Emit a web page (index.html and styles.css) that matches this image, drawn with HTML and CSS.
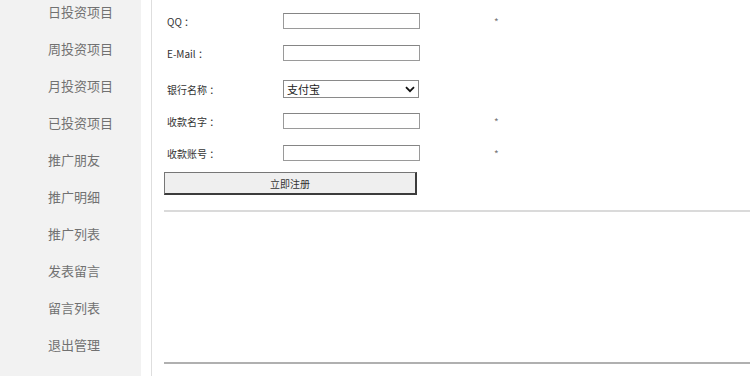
FILE: index.html
```html
<!DOCTYPE html>
<html lang="zh-CN">
<head>
  <meta charset="UTF-8" />
  <meta name="viewport" content="width=device-width, initial-scale=1.0"/>
  <title>会员注册</title>
  <link rel="stylesheet" href="styles.css">
</head>
<body>
  <div class="page">
    <div id="sidebar">
      <ul class="menu">
        <li>日投资项目</li>
        <li>周投资项目</li>
        <li>月投资项目</li>
        <li>已投资项目</li>
        <li>推广朋友</li>
        <li>推广明细</li>
        <li>推广列表</li>
        <li>发表留言</li>
        <li>留言列表</li>
        <li>退出管理</li>
      </ul>
    </div>

    <div id="main">
      <form name="regForm" class="reg-form">
        <div class="form-row">
          <label for="qq">QQ ：</label>
          <input type="text" id="qq" name="qq" />
          <span class="star">*</span>
        </div>
        <div class="form-row">
          <label for="email">E-Mail ：</label>
          <input type="text" id="email" name="email" />
          <span class="star"></span>
        </div>
        <div class="form-row form-row-select">
          <label for="bank">银行名称 ：</label>
          <div class="select-wrap">
            <select id="bank" name="bank">
              <option value="alipay">支付宝</option>
              <option value="icbc">工商银行</option>
              <option value="ccb">建设银行</option>
            </select>
            <svg class="chevron" width="10" height="7" viewBox="0 0 10 7">
              <path d="M1 1.2 L5 5.2 L9 1.2" fill="none" stroke="#111" stroke-width="1.8"/>
            </svg>
          </div>
          <span class="star"></span>
        </div>
        <div class="form-row">
          <label for="payname">收款名字 ：</label>
          <input type="text" id="payname" name="payname" />
          <span class="star">*</span>
        </div>
        <div class="form-row">
          <label for="account">收款账号 ：</label>
          <input type="text" id="account" name="account" />
          <span class="star">*</span>
        </div>
        <div class="buttons">
          <button type="submit">立即注册</button>
        </div>
      </form>

      <div class="divider"></div>
      <div class="notice"></div>
      <div class="divider divider-dark"></div>
    </div>
  </div>
</body>
</html>
```

FILE: styles.css
```css
html, body {
  margin: 0;
  padding: 0;
  height: 100%;
  overflow: hidden;
  background: #fff;
}

body {
  font-family: "Noto Sans CJK SC", "Liberation Sans", sans-serif;
  color: #333;
}

.page {
  display: flex;
  height: 376px;
}

#sidebar {
  width: 141px;
  background-color: #f2f2f2;
  flex-shrink: 0;
}

.menu {
  list-style: none;
  margin: -7px 0 0 0;
  padding: 0 0 0 48px;
}

.menu li {
  height: 37px;
  line-height: 37px;
  font-size: 13px;
  color: #717171;
}

#main {
  flex: 1;
  margin-left: 10px;
  border-left: 1px solid #dedede;
  padding-left: 12px;
}

.reg-form {
  padding-top: 5px;
}

.form-row {
  display: flex;
  align-items: center;
  height: 32px;
}

.form-row-select {
  margin-top: 4px;
}

.form-row label {
  width: 119px;
  padding-left: 3px;
  box-sizing: border-box;
  font-size: 10px;
  color: #333;
}

.form-row input[type="text"] {
  width: 137px;
  height: 16px;
  box-sizing: border-box;
  margin: 0;
  padding: 0 3px;
  border: 1px solid #9a9a9a;
  border-top-color: #858585;
  background: #fff;
}

.select-wrap {
  position: relative;
  width: 136px;
  height: 18px;
}

.select-wrap select {
  -webkit-appearance: none;
  appearance: none;
  display: block;
  width: 136px;
  height: 18px;
  box-sizing: border-box;
  margin: 0;
  padding: 0 0 0 3px;
  border: 1px solid #8a8a8a;
  background: #fff;
  font-family: inherit;
  font-size: 11px;
  color: #222;
  line-height: 16px;
}

.chevron {
  position: absolute;
  right: 4px;
  top: 6px;
  pointer-events: none;
}

.star {
  margin-left: 74px;
  font-size: 10px;
  color: #777;
}

.buttons {
  display: flex;
  margin-top: 3px;
}

.buttons button {
  display: block;
  width: 253px;
  height: 23px;
  box-sizing: border-box;
  margin: 0;
  border-top: 1px solid #767676;
  border-left: 1px solid #767676;
  border-right: 2px solid #3c3c3c;
  border-bottom: 2px solid #3c3c3c;
  background-color: #efefef;
  font-family: inherit;
  font-size: 10px;
  color: #333;
}

.divider {
  margin-top: 15px;
  border-top: 2px solid #dadada;
}

.notice {
  height: 150px;
}

.divider-dark {
  margin-top: 0;
  border-top-color: #b0b0b0;
}
```
